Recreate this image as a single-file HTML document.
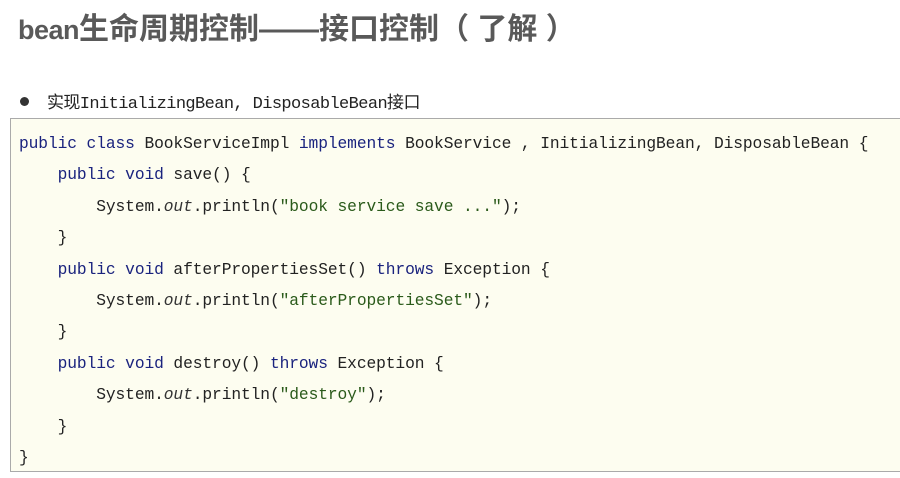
<!DOCTYPE html>
<html><head><meta charset="utf-8"><style>
html,body{margin:0;padding:0;width:900px;height:478px;background:#fff;overflow:hidden;position:relative}
.t{position:absolute;left:18px;top:4px;font:bold 27px "Liberation Sans","Noto Sans CJK SC",sans-serif;color:#595959;letter-spacing:-0.5px}
.t span{font-size:30px;letter-spacing:0}
.b{position:absolute;left:20px;top:88px;font:17px "Liberation Mono","Noto Sans CJK SC",monospace;color:#222;letter-spacing:-0.6px}
.b .d{display:inline-block;width:9px;height:9px;border-radius:50%;background:#333;margin-right:18px;vertical-align:2px}
.box{position:absolute;left:10px;top:118px;width:900px;height:352px;background:#fdfdf0;border:1px solid #aaa;border-right:none}
.c{position:absolute;left:19px;top:128px;font:16.25px/31.4px "Liberation Mono",monospace;letter-spacing:-0.1px;color:#222;white-space:pre;margin:0}
.k{color:#1a237e}.s{color:#2a5a1a}i{color:#333}
</style></head><body>
<div class="t">bean<span>生命周期控制——接口控制（ 了解 ）</span></div>
<div class="b"><span class="d"></span>实现InitializingBean, DisposableBean接口</div>
<div class="box"></div>
<pre class="c"><span class="k">public class</span> BookServiceImpl <span class="k">implements</span> BookService , InitializingBean, DisposableBean {
    <span class="k">public void</span> save() {
        System.<i>out</i>.println(<span class="s">"book service save ..."</span>);
    }
    <span class="k">public void</span> afterPropertiesSet() <span class="k">throws</span> Exception {
        System.<i>out</i>.println(<span class="s">"afterPropertiesSet"</span>);
    }
    <span class="k">public void</span> destroy() <span class="k">throws</span> Exception {
        System.<i>out</i>.println(<span class="s">"destroy"</span>);
    }
}</pre>
</body></html>
